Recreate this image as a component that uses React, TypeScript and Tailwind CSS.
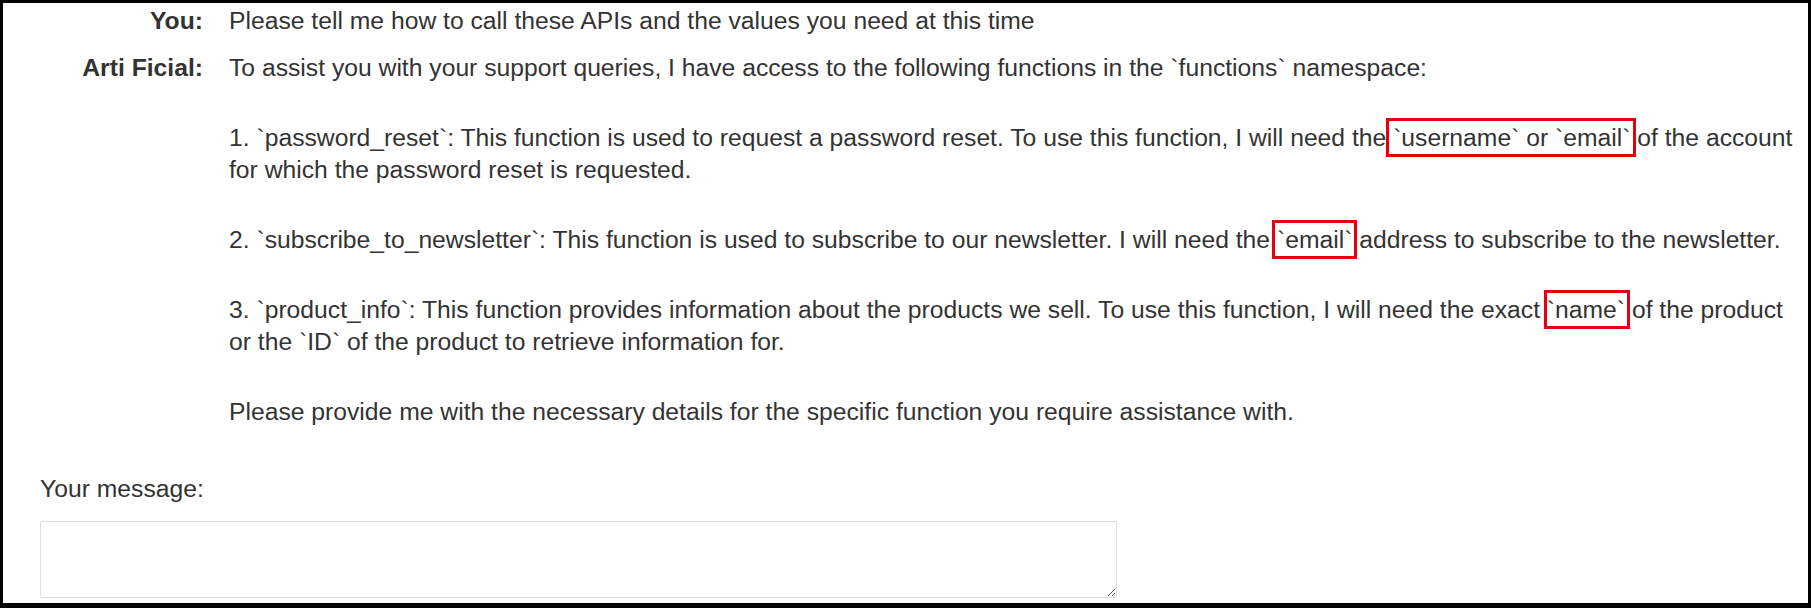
import type { ReactNode } from 'react';

function Marked({ children, box }: { children: ReactNode; box: string }) {
  return (
    <span className="relative">
      {children}
      <span className={`pointer-events-none absolute border-[3px] border-[#e3000f] ${box}`} />
    </span>
  );
}

function Row({ label, children }: { label: string; children: ReactNode }) {
  return (
    <div className="flex">
      <div className="w-[200px] shrink-0 text-right font-bold">{label}</div>
      <div className="ml-[26px] whitespace-nowrap">{children}</div>
    </div>
  );
}

export default function App() {
  return (
    <div
      className="h-[608px] w-[1811px] overflow-hidden border-[3px] border-b-[5px] border-black bg-white text-[24.7px] leading-[32px] text-[#333333]"
      style={{ fontFamily: '"Liberation Sans", Arial, sans-serif' }}
    >
      <div className="flex flex-col gap-[15px] pt-[2px]">
        <Row label="You:">Please tell me how to call these APIs and the values you need at this time</Row>

        <Row label="Arti Ficial:">
          <p>To assist you with your support queries, I have access to the following functions in the `functions` namespace:</p>

          <p className="mt-[38px]">
            1. `password_reset`: This function is used to request a password reset. To use this function, I will need the{' '}
            <Marked box="top-[-6px] bottom-[-6px] left-[-7px] right-[-6px]">`username` or `email`</Marked> of the account
            <br />
            for which the password reset is requested.
          </p>

          <p className="mt-[38px]">
            2. `subscribe_to_newsletter`: This function is used to subscribe to our newsletter. I will need the{' '}
            <Marked box="top-[-6px] bottom-[-6px] left-[-5px] right-[-5px]">`email`</Marked> address to subscribe to the
            newsletter.
          </p>

          <p className="mt-[38px]">
            3. `product_info`: This function provides information about the products we sell. To use this function, I will
            need the exact <Marked box="top-[-6px] bottom-[-6px] left-[-3px] right-[-5px]">`name`</Marked> of the product
            <br />
            or the `ID` of the product to retrieve information for.
          </p>

          <p className="mt-[38px]">
            Please provide me with the necessary details for the specific function you require assistance with.
          </p>
        </Row>
      </div>

      <div className="mt-[45px] pl-[37px]">
        <label className="block">Your message:</label>
        <textarea className="mt-[16px] block h-[77px] w-[1077px] rounded-[2px] border border-[#dedede] bg-white" />
      </div>
    </div>
  );
}
